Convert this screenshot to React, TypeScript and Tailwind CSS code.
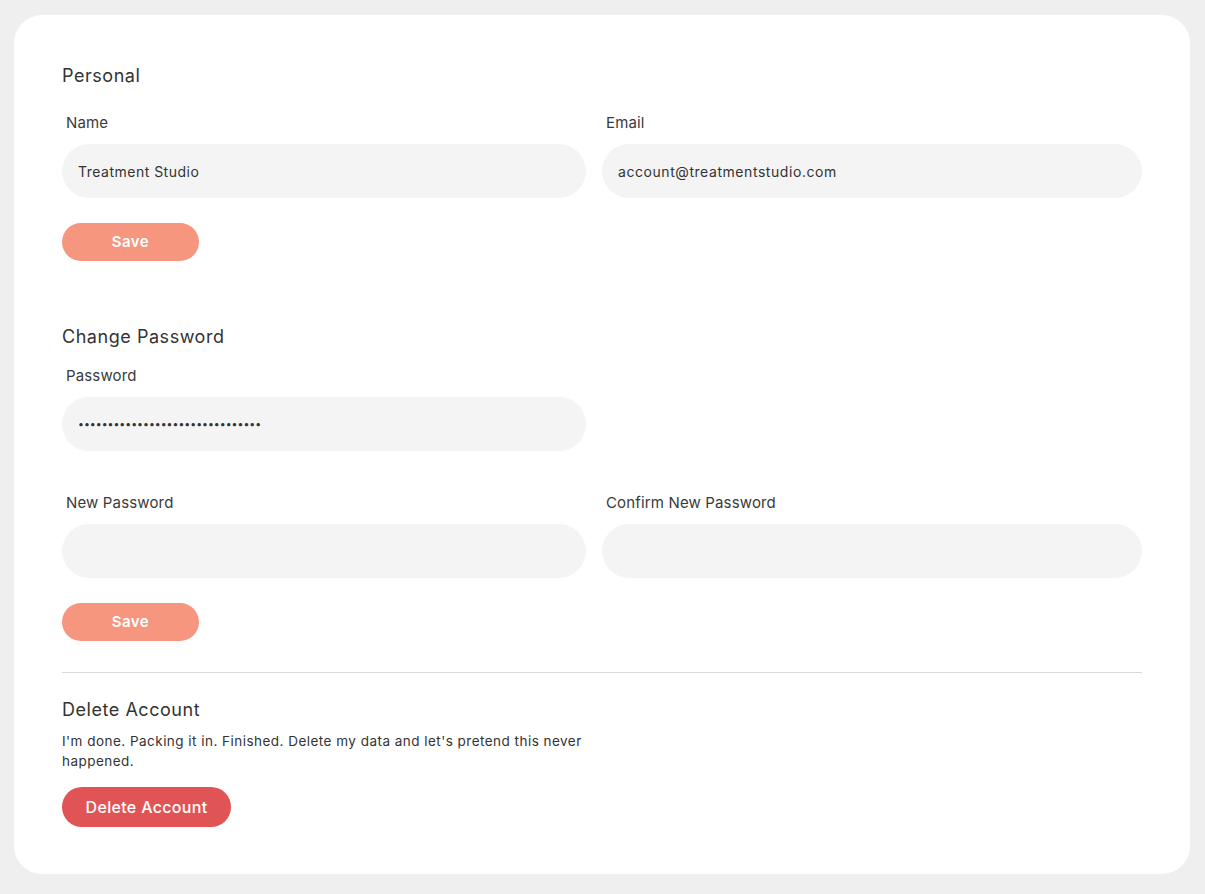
import React from "react";

const font = { fontFamily: "Inter, 'Noto Sans', sans-serif" };

function Field({
  label,
  value,
  type = "text",
  className = "",
  inputClass = "text-[14px] tracking-[0.035em]",
}: {
  label: string;
  value?: string;
  type?: string;
  className?: string;
  inputClass?: string;
}) {
  return (
    <div className={className}>
      <label className="block pl-1 text-[15px] leading-[22px] tracking-[0.01em] text-[#3a3a3a]">{label}</label>
      <input
        type={type}
        readOnly
        value={value ?? ""}
        className={`mt-[10px] block h-[54px] w-full rounded-full bg-[#f4f4f4] pl-4 text-[#333] outline-none ${inputClass}`}
      />
    </div>
  );
}

function SaveButton() {
  return (
    <button className="block h-[38px] w-[137px] rounded-full bg-[#f7967e] text-[15px] font-semibold tracking-[0.03em] text-white">
      Save
    </button>
  );
}

export default function App() {
  return (
    <div className="min-h-[894px] bg-[#efefef] pl-[14px] pr-[15px] pt-[15px] pb-[19px]" style={font}>
      <div className="rounded-[28px] bg-white px-[48px] pt-[47px] pb-[47px]">
        <h2 className="text-[18px] leading-[28px] tracking-[0.03em] text-[#333]">Personal</h2>
        <div className="mt-[22px] grid grid-cols-2">
          <Field label="Name" value="Treatment Studio" className="pr-4" />
          <Field label="Email" value="account@treatmentstudio.com" inputClass="text-[14px] tracking-[0.04em]" />
        </div>
        <div className="mt-[25px]">
          <SaveButton />
        </div>

        <h2 className="mt-[62px] text-[18px] leading-[28px] tracking-[0.03em] text-[#333]">Change Password</h2>
        <div className="mt-[14px] grid grid-cols-2">
          <Field
            label="Password"
            type="password"
            value="1234567890123456789012345678901"
            className="pr-4"
            inputClass="text-[10.5px]"
          />
        </div>
        <div className="mt-[41px] grid grid-cols-2">
          <Field label="New Password" type="password" className="pr-4" />
          <Field label="Confirm New Password" type="password" />
        </div>
        <div className="mt-[25px]">
          <SaveButton />
        </div>

        <div className="mt-[31px] h-px bg-[#d9d9d9]" />

        <h2 className="mt-[23px] text-[18px] leading-[28px] tracking-[0.03em] text-[#333]">Delete Account</h2>
        <p className="mt-[7px] max-w-[540px] text-[13.5px] leading-[20px] tracking-[0.035em] text-[#333]">
          I'm done. Packing it in. Finished. Delete my data and let's pretend this never happened.
        </p>
        <button className="mt-[16px] block h-[40px] w-[169px] rounded-full bg-[#e15456] text-[16px] font-medium tracking-[0.02em] text-white">
          Delete Account
        </button>
      </div>
    </div>
  );
}
